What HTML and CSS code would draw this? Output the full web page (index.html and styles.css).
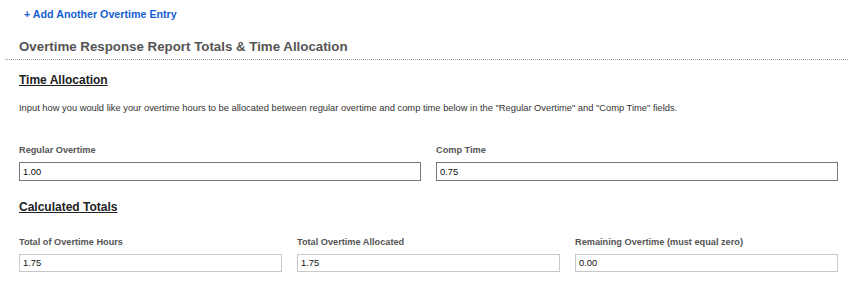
FILE: index.html
```html
<!DOCTYPE html>
<html>
<head>
<meta charset="utf-8">
<link rel="stylesheet" href="styles.css">
</head>
<body>
<div class="add-row"><a class="add-link" href="#">+ Add Another Overtime Entry</a></div>
<div class="section">
  <h2 class="section-title">Overtime Response Report Totals &amp; Time Allocation</h2>
  <div class="content">
    <h3 class="sub-title">Time Allocation</h3>
    <p class="intro">Input how you would like your overtime hours to be allocated between regular overtime and comp time below in the "Regular Overtime" and "Comp Time" fields.</p>
    <div class="grid two">
      <div class="field">
        <label class="label">Regular Overtime</label>
        <input class="input" type="text" value="1.00">
      </div>
      <div class="field">
        <label class="label">Comp Time</label>
        <input class="input" type="text" value="0.75">
      </div>
    </div>
    <h3 class="sub-title calc">Calculated Totals</h3>
    <div class="grid three">
      <div class="field">
        <label class="label">Total of Overtime Hours</label>
        <input class="input readonly" type="text" value="1.75" readonly>
      </div>
      <div class="field">
        <label class="label">Total Overtime Allocated</label>
        <input class="input readonly" type="text" value="1.75" readonly>
      </div>
      <div class="field">
        <label class="label">Remaining Overtime (must equal zero)</label>
        <input class="input readonly" type="text" value="0.00" readonly>
      </div>
    </div>
  </div>
</div>
</body>
</html>
```
FILE: styles.css
```css
html, body {
  margin: 0;
  padding: 0;
  background: #fff;
  font-family: "Liberation Sans", Arial, sans-serif;
}
.add-row {
  padding: 6px 0 0 24px;
  height: 14px;
  line-height: 14px;
}
.add-link {
  color: #1660cf;
  font-size: 10.7px;
  font-weight: bold;
  text-decoration: none;
}
.section {
  margin: 19px 3px 0 5px;
}
.section-title {
  margin: 0;
  padding: 0 14px 4px 14px;
  font-size: 13.3px;
  line-height: 16px;
  font-weight: bold;
  color: #555;
  border-bottom: 1px dotted #999;
}
.content {
  padding: 0 10px 0 14px;
}
.sub-title {
  margin: 13px 0 0 0;
  font-size: 12px;
  line-height: 15px;
  font-weight: bold;
  color: #222;
  text-decoration: underline;
}
.sub-title.calc {
  margin-top: 19px;
}
.intro {
  margin: 14px 0 0 0;
  font-size: 9.33px;
  line-height: 12px;
  color: #333;
}
.grid {
  display: grid;
  column-gap: 15px;
}
.grid.two {
  grid-template-columns: 1fr 1fr;
  margin-top: 30px;
}
.grid.three {
  grid-template-columns: 1fr 1fr 1fr;
  margin-top: 21px;
}
.field {
  display: flex;
  flex-direction: column;
}
.label {
  font-size: 9.2px;
  line-height: 12px;
  font-weight: bold;
  color: #555;
  margin-bottom: 6px;
}
.input {
  box-sizing: border-box;
  height: 19px;
  margin: 0;
  padding: 0 3px;
  border: 1px solid #767676;
  font-family: "Liberation Sans", Arial, sans-serif;
  font-size: 9.33px;
  color: #111;
  background: #fff;
  outline: none;
}
.input.readonly {
  border-color: #c8c8c8;
  height: 18px;
}
```
